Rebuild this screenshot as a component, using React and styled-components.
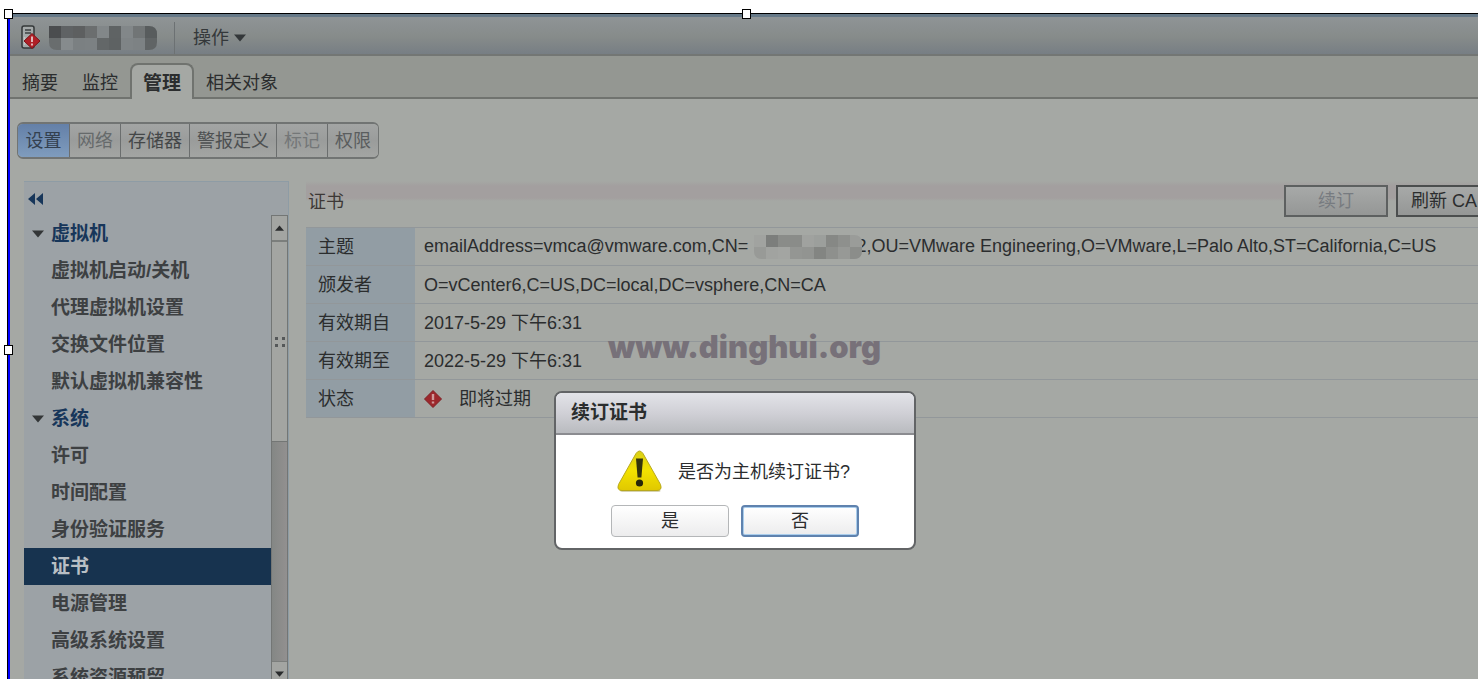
import React from "react";
import styled, { createGlobalStyle } from "styled-components";

const tabs = ["摘要", "监控", "管理", "相关对象"];

const sections = [
  { name: "设置", tone: "#33404f" },
  { name: "网络", tone: "#666a6b" },
  { name: "存储器", tone: "#444748" },
  { name: "警报定义", tone: "#4d5051" },
  { name: "标记", tone: "#747778" },
  { name: "权限", tone: "#5a5d5e" },
];

const menu = [
  {
    title: "虚拟机",
    items: [
      "虚拟机启动/关机",
      "代理虚拟机设置",
      "交换文件位置",
      "默认虚拟机兼容性",
    ],
  },
  {
    title: "系统",
    items: [
      "许可",
      "时间配置",
      "身份验证服务",
      "证书",
      "电源管理",
      "高级系统设置",
      "系统资源预留",
    ],
  },
];

const nameTiles = [
  ["#4b4d4f", "#5f6264", "#5d5f60", "#6b6e6f", "#828789", "#5f6364", "#828789", "#717576", "#585c5d"],
  ["#696d6e", "#868b8d", "#7b8082", "#7c8183", "#636768", "#5e6263", "#7f8486", "#7d8284", "#606465"],
];

const hostTiles = [
  ["#a1a3a0", "#7c7e7c", "#8a8c89", "#8a8c89", "#a0a29f", "#9c9f9c", "#868885", "#8e908d", "#9a9c99"],
  ["#989a97", "#a1a3a0", "#a3a5a2", "#949693", "#929491", "#838582", "#8e908d", "#979996", "#8b8d8a"],
];

const Mosaic = ({ tiles, id, overlap }) => {
  const width = tiles[0].length * 12;
  return (
    <MosaicSvg
      $overlap={overlap}
      width={width}
      height="24"
      viewBox={`0 0 ${width} 24`}
    >
      <clipPath id={id}>
        <path d={`M0 0H${width - 8}Q${width} 0 ${width} 8V16Q${width} 24 ${width - 8} 24H8Q0 24 0 16z`} />
      </clipPath>
      <g clipPath={`url(#${id})`} shapeRendering="crispEdges">
        {tiles.map((row, y) =>
          row.map((color, x) => (
            <rect
              key={`${x}-${y}`}
              x={x * 12}
              y={y * 12}
              width="12"
              height="12"
              fill={color}
            />
          ))
        )}
      </g>
    </MosaicSvg>
  );
};

const HostIcon = () => (
  <svg width="20" height="26" viewBox="0 0 20 26">
    <rect x="1" y="1" width="12" height="22" rx="2" fill="#a4a9a9" stroke="#343839" strokeWidth="1.5" />
    <path d="M4 5h6M4 8h6" stroke="#3c4041" strokeWidth="1.3" />
    <path d="M3.5 12v8" stroke="#c0c4c3" strokeWidth="1.5" />
    <path d="M11 8.500l8 7.500-8 7.500-8-7.500z" fill="#b01f26" stroke="#7c1519" />
    <path d="M11 11.500v5.500M11 18.500v2" stroke="#dfb9b9" strokeWidth="2" />
  </svg>
);

const AlertIcon = () => (
  <svg width="18" height="18" viewBox="0 0 18 18">
    <path d="M9 0.500L17.500 9 9 17.500 0.500 9z" fill="#9c272c" stroke="#7f1f23" />
    <path d="M9 4v6M9 11.500v2" stroke="#cf9a9a" strokeWidth="2.400" />
  </svg>
);

const WarningIcon = () => (
  <svg width="48" height="44" viewBox="0 0 48 44">
    <defs>
      <linearGradient id="warn" x1="0" y1="0" x2="0" y2="1">
        <stop offset="0" stopColor="#d9cf16" />
        <stop offset="0.5" stopColor="#f3e200" />
        <stop offset="1" stopColor="#e0c800" />
      </linearGradient>
    </defs>
    <path d="M24 5L43 38.500Q46.500 42 42 42H6.500Q3 42 4.500 38.500z" fill="#b9b47c" opacity="0.6" />
    <path
      d="M20 3.500Q23.500 -1.500 27 3.500L44.500 34.500Q46.500 40.500 41 40.500H6Q0.500 40.500 2.500 34.500z"
      fill="url(#warn)"
      stroke="#b8a81c"
    />
    <path d="M20 8.500h7l-1.600 19h-3.800z" fill="#33330c" />
    <circle cx="23.500" cy="33" r="3.600" fill="#26260a" />
  </svg>
);

const Caret = ({ up, size = 12 }) => (
  <svg width={size} height="8" viewBox="0 0 12 8">
    <path d={up ? "M0 7.500h12L6 0.500z" : "M0 0.500h12L6 7.500z"} fill="currentColor" />
  </svg>
);

const App = () => {
  return (
    <>
      <GlobalStyle />
      <Page>
        <Frame>
          <Header>
            <HostIcon />
            <Mosaic tiles={nameTiles} id="nameClip" />
            <Actions>
              操作 <Caret />
            </Actions>
          </Header>
          <TabBar>
            {tabs.map((tab) => (
              <Tab key={tab} $active={tab === "管理"}>
                {tab}
              </Tab>
            ))}
          </TabBar>
          <Sections>
            {sections.map(({ name, tone }) => (
              <Section key={name} $active={name === "设置"} $tone={tone}>
                {name}
              </Section>
            ))}
          </Sections>
          <Workspace>
            <Sidebar>
              <Collapse aria-label="collapse">
                <svg width="16" height="12" viewBox="0 0 16 12">
                  <path d="M7 0v12L0 6zM15 0v12L8 6z" fill="#17365a" />
                </svg>
              </Collapse>
              <SidebarBody>
                <Menu>
                  {menu.map(({ title, items }) => (
                    <React.Fragment key={title}>
                      <MenuTitle>
                        <Caret size={14} />
                        {title}
                      </MenuTitle>
                      {items.map((item) => (
                        <MenuItem key={item} href="#" $active={item === "证书"}>
                          {item}
                        </MenuItem>
                      ))}
                    </React.Fragment>
                  ))}
                </Menu>
                <ScrollTrack>
                  <ScrollButton aria-label="up">
                    <Caret up size={9} />
                  </ScrollButton>
                  <ScrollThumb>
                    <svg width="10" height="10" viewBox="0 0 10 10">
                      <path d="M0 0h3v3H0zM7 0h3v3H7zM0 7h3v3H0zM7 7h3v3H7z" fill="#555859" />
                    </svg>
                  </ScrollThumb>
                  <ScrollSpace />
                  <ScrollButton aria-label="down" $last>
                    <Caret size={9} />
                  </ScrollButton>
                </ScrollTrack>
              </SidebarBody>
            </Sidebar>
            <Content>
              <ContentHeader>
                <Heading>证书</Heading>
                <RenewButton disabled>续订</RenewButton>
                <RefreshButton>刷新 CA</RefreshButton>
              </ContentHeader>
              <Table>
                <tbody>
                  <tr>
                    <th>主题</th>
                    <td>
                      emailAddress=vmca@vmware.com,CN=
                      <Mosaic tiles={hostTiles} id="hostClip" overlap />
                      2,OU=VMware Engineering,O=VMware,L=Palo Alto,ST=California,C=US
                    </td>
                  </tr>
                  <tr>
                    <th>颁发者</th>
                    <td>O=vCenter6,C=US,DC=local,DC=vsphere,CN=CA</td>
                  </tr>
                  <tr>
                    <th>有效期自</th>
                    <td>2017-5-29 下午6:31</td>
                  </tr>
                  <tr>
                    <th>有效期至</th>
                    <td>2022-5-29 下午6:31</td>
                  </tr>
                  <tr>
                    <th>状态</th>
                    <td>
                      <Status>
                        <AlertIcon />
                        即将过期
                      </Status>
                    </td>
                  </tr>
                </tbody>
              </Table>
            </Content>
          </Workspace>
        </Frame>
        <Watermark>www.dinghui.org</Watermark>
        <Dialog role="dialog" aria-labelledby="dialogTitle">
          <DialogTitle id="dialogTitle">续订证书</DialogTitle>
          <Message>
            <WarningIcon />
            是否为主机续订证书?
          </Message>
          <DialogButtons>
            <DialogButton>是</DialogButton>
            <DialogButton $focused>否</DialogButton>
          </DialogButtons>
        </Dialog>
        <Handle $x="4px" $y="9px" />
        <Handle $x="742px" $y="9px" />
        <Handle $x="4px" $y="345px" />
      </Page>
    </>
  );
};

export default App;

const GlobalStyle = createGlobalStyle`
  * {
    box-sizing: border-box;
  }
  body {
    margin: 0;
    background: #fff;
  }
  body, button {
    font-family: "Liberation Sans", "Noto Sans CJK SC", sans-serif;
    font-size: 18px;
    line-height: 24px;
  }
  button {
    margin: 0;
    padding: 0;
    border: 0;
    background: none;
    color: inherit;
    white-space: nowrap;
  }
  svg {
    flex: none;
  }
`;

const Page = styled.div`
  position: relative;
  height: 100vh;
  padding: 13px 0 0 8px;
  overflow: hidden;
`;
const Frame = styled.div`
  display: flex;
  flex-direction: column;
  height: 100%;
  border-top: 1px solid #000;
  border-left: 2px solid #0000ff;
  box-shadow: -1px 0 0 #000;
  background: #a5a8a4;
  color: #2b2d2e;
  overflow: hidden;
`;
const Header = styled.header`
  display: flex;
  flex: none;
  align-items: center;
  gap: 8px;
  height: 42px;
  padding: 4px 11px 0;
  border-top: 3px solid #667988;
  border-bottom: 2px solid #737674;
  background: linear-gradient(#8f9496, #868b8a 55%, #777e84);
`;
const MosaicSvg = styled.svg`
  position: relative;
  margin: ${(props) => (props.$overlap ? "0 -6px 0 6px" : "0")};
  vertical-align: middle;
`;
const Actions = styled.button`
  display: flex;
  align-items: center;
  gap: 5px;
  height: 32px;
  margin-left: 9px;
  padding-left: 18px;
  border-left: 1px solid #6c7173;
  color: #34383a;
`;
const TabBar = styled.nav`
  display: flex;
  flex: none;
  align-items: flex-end;
  height: 43px;
  background: #949792;
  box-shadow: inset 0 -2px 0 #70736f;
`;
const Tab = styled.button`
  height: 36px;
  padding: ${(props) => (props.$active ? "3px 11px 0" : "4px 12px 0")};
  border: solid #70736f;
  border-width: ${(props) => (props.$active ? "2px 2px 0" : "0")};
  border-radius: 8px 8px 0 0;
  background: ${(props) => (props.$active ? "#a5a8a4" : "none")};
  font-size: ${(props) => (props.$active ? "19px" : "18px")};
  font-weight: ${(props) => (props.$active ? "bold" : "normal")};
`;
const Sections = styled.nav`
  display: flex;
  flex: none;
  align-self: flex-start;
  margin: 23px 7px 22px;
  border: 2px solid #717473;
  border-width: 2px 1px;
  border-radius: 6px;
  overflow: hidden;
`;
const Section = styled.button`
  min-width: 51px;
  height: 33px;
  padding: 0 7px;
  background: ${(props) =>
    props.$active
      ? "linear-gradient(#6480a8, #7f9cbd)"
      : "linear-gradient(#a3a5a4, #9a9c9b 50%, #a3a5a3)"};
  color: ${(props) => props.$tone};
  & + & {
    border-left: 1px solid #6b6e6e;
  }
`;
const Workspace = styled.div`
  display: flex;
  flex: 1;
  gap: 17px;
  min-height: 0;
  padding-left: 14px;
`;
const Sidebar = styled.aside`
  display: flex;
  flex: none;
  flex-direction: column;
  width: 265px;
  border: 1px solid #8e9ca5;
  border-width: 1px 1px 0 0;
  background: #9ca2a6;
`;
const Collapse = styled.button`
  display: flex;
  flex: none;
  align-items: center;
  height: 33px;
  padding-left: 4px;
`;
const SidebarBody = styled.div`
  display: flex;
  flex: 1;
  min-height: 0;
`;
const Menu = styled.nav`
  flex: 1;
  overflow: hidden;
  font-size: 19px;
  font-weight: bold;
`;
const MenuTitle = styled.div`
  display: flex;
  align-items: center;
  gap: 6px;
  height: 37px;
  padding-left: 7px;
  color: #17365a;
  svg {
    color: #333637;
  }
`;
const MenuItem = styled.a`
  display: flex;
  align-items: center;
  height: 37px;
  padding-left: 27px;
  text-decoration: none;
  background: ${(props) => (props.$active ? "#17334f" : "none")};
  color: ${(props) => (props.$active ? "#b9bfc4" : "#3d4042")};
`;
const ScrollTrack = styled.div`
  display: flex;
  flex-direction: column;
  width: 17px;
  border: 1px solid #737675;
  border-width: 1px 1px 0;
  background: #a3a5a2;
`;
const ScrollButton = styled.button`
  display: flex;
  flex: none;
  align-items: center;
  justify-content: center;
  height: ${(props) => (props.$last ? "18px" : "26px")};
  padding-top: ${(props) => (props.$last ? "6px" : "0")};
  border-bottom: ${(props) => (props.$last ? "0" : "2px solid #7b7e7c")};
  border-top: ${(props) => (props.$last ? "1px solid #7b7e7c" : "0")};
  color: #2a2c2d;
`;
const ScrollThumb = styled.div`
  display: flex;
  flex: none;
  align-items: center;
  justify-content: center;
  height: 200px;
  border-bottom: 1px solid #737675;
`;
const ScrollSpace = styled.div`
  flex: 1;
  background: linear-gradient(90deg, #848785, #929090);
`;
const Content = styled.main`
  flex: 1;
  min-width: 0;
`;
const ContentHeader = styled.div`
  display: flex;
  align-items: center;
  height: 46px;
  padding-top: 4px;
  padding-bottom: 12px;
  background: linear-gradient(#a5a8a4, #a39f9f 5px, #a39f9f 17px, #a5a8a4 20px);
`;
const Heading = styled.h1`
  flex: 1;
  margin: 0;
  padding: 4px 2px 0;
  font-size: 18px;
  line-height: 24px;
  font-weight: normal;
  color: #3d3836;
`;
const RenewButton = styled.button`
  width: 104px;
  height: 32px;
  margin: 2px 8px 0 0;
  border: 2px solid #5d6060;
  background: linear-gradient(#a7a9a8, #959796);
  color: #777b80;
`;
const RefreshButton = styled.button`
  height: 32px;
  margin-top: 2px;
  padding: 0 1px 0 13px;
  border: solid #4b4e4e;
  border-width: 2px 0 2px 2px;
  background: linear-gradient(#a7a9a8, #959796);
`;
const Table = styled.table`
  width: 100%;
  border-collapse: collapse;
  border-top: 1px solid #92979a;
  white-space: nowrap;
  tr {
    height: 38px;
    border-bottom: 1px solid #92979a;
  }
  th {
    width: 109px;
    padding: 0 12px;
    background: #929da4;
    font-weight: normal;
    text-align: left;
  }
  td {
    padding: 0 0 0 9px;
  }
`;
const Status = styled.div`
  display: flex;
  align-items: center;
  gap: 17px;
`;
const Watermark = styled.div`
  position: absolute;
  left: 608px;
  top: 329px;
  font-family: Inter, sans-serif;
  font-size: 31px;
  font-weight: 900;
  line-height: 36px;
  color: #777179;
`;
const Dialog = styled.section`
  position: absolute;
  left: 554px;
  top: 391px;
  width: 362px;
  border: 2px solid #626466;
  border-radius: 8px;
  background: #fff;
  color: #2b2d2e;
  overflow: hidden;
`;
const DialogTitle = styled.h2`
  margin: 0;
  padding: 8px 15px;
  border-bottom: 2px solid #8b8c90;
  background: linear-gradient(#e2e3e8, #d0d0d6 50%, #b9bbbf);
  font-size: 19px;
  line-height: 24px;
`;
const Message = styled.div`
  display: flex;
  align-items: center;
  gap: 14px;
  padding: 15px 0 0 60px;
`;
const DialogButtons = styled.div`
  display: flex;
  justify-content: center;
  gap: 12px;
  padding: 11px 0;
`;
const DialogButton = styled.button`
  width: 118px;
  height: 32px;
  border: ${(props) =>
    props.$focused ? "2px solid #5f82ae" : "1px solid #b4b6b8"};
  border-radius: 4px;
  background: linear-gradient(#fff, #ececed);
  box-shadow: ${(props) =>
    props.$focused ? "inset 0 0 0 1px #a9cdec" : "none"};
`;
const Handle = styled.span`
  position: absolute;
  left: ${(props) => props.$x};
  top: ${(props) => props.$y};
  width: 9px;
  height: 10px;
  border: 1px solid #000;
  background: #fff;
`;
